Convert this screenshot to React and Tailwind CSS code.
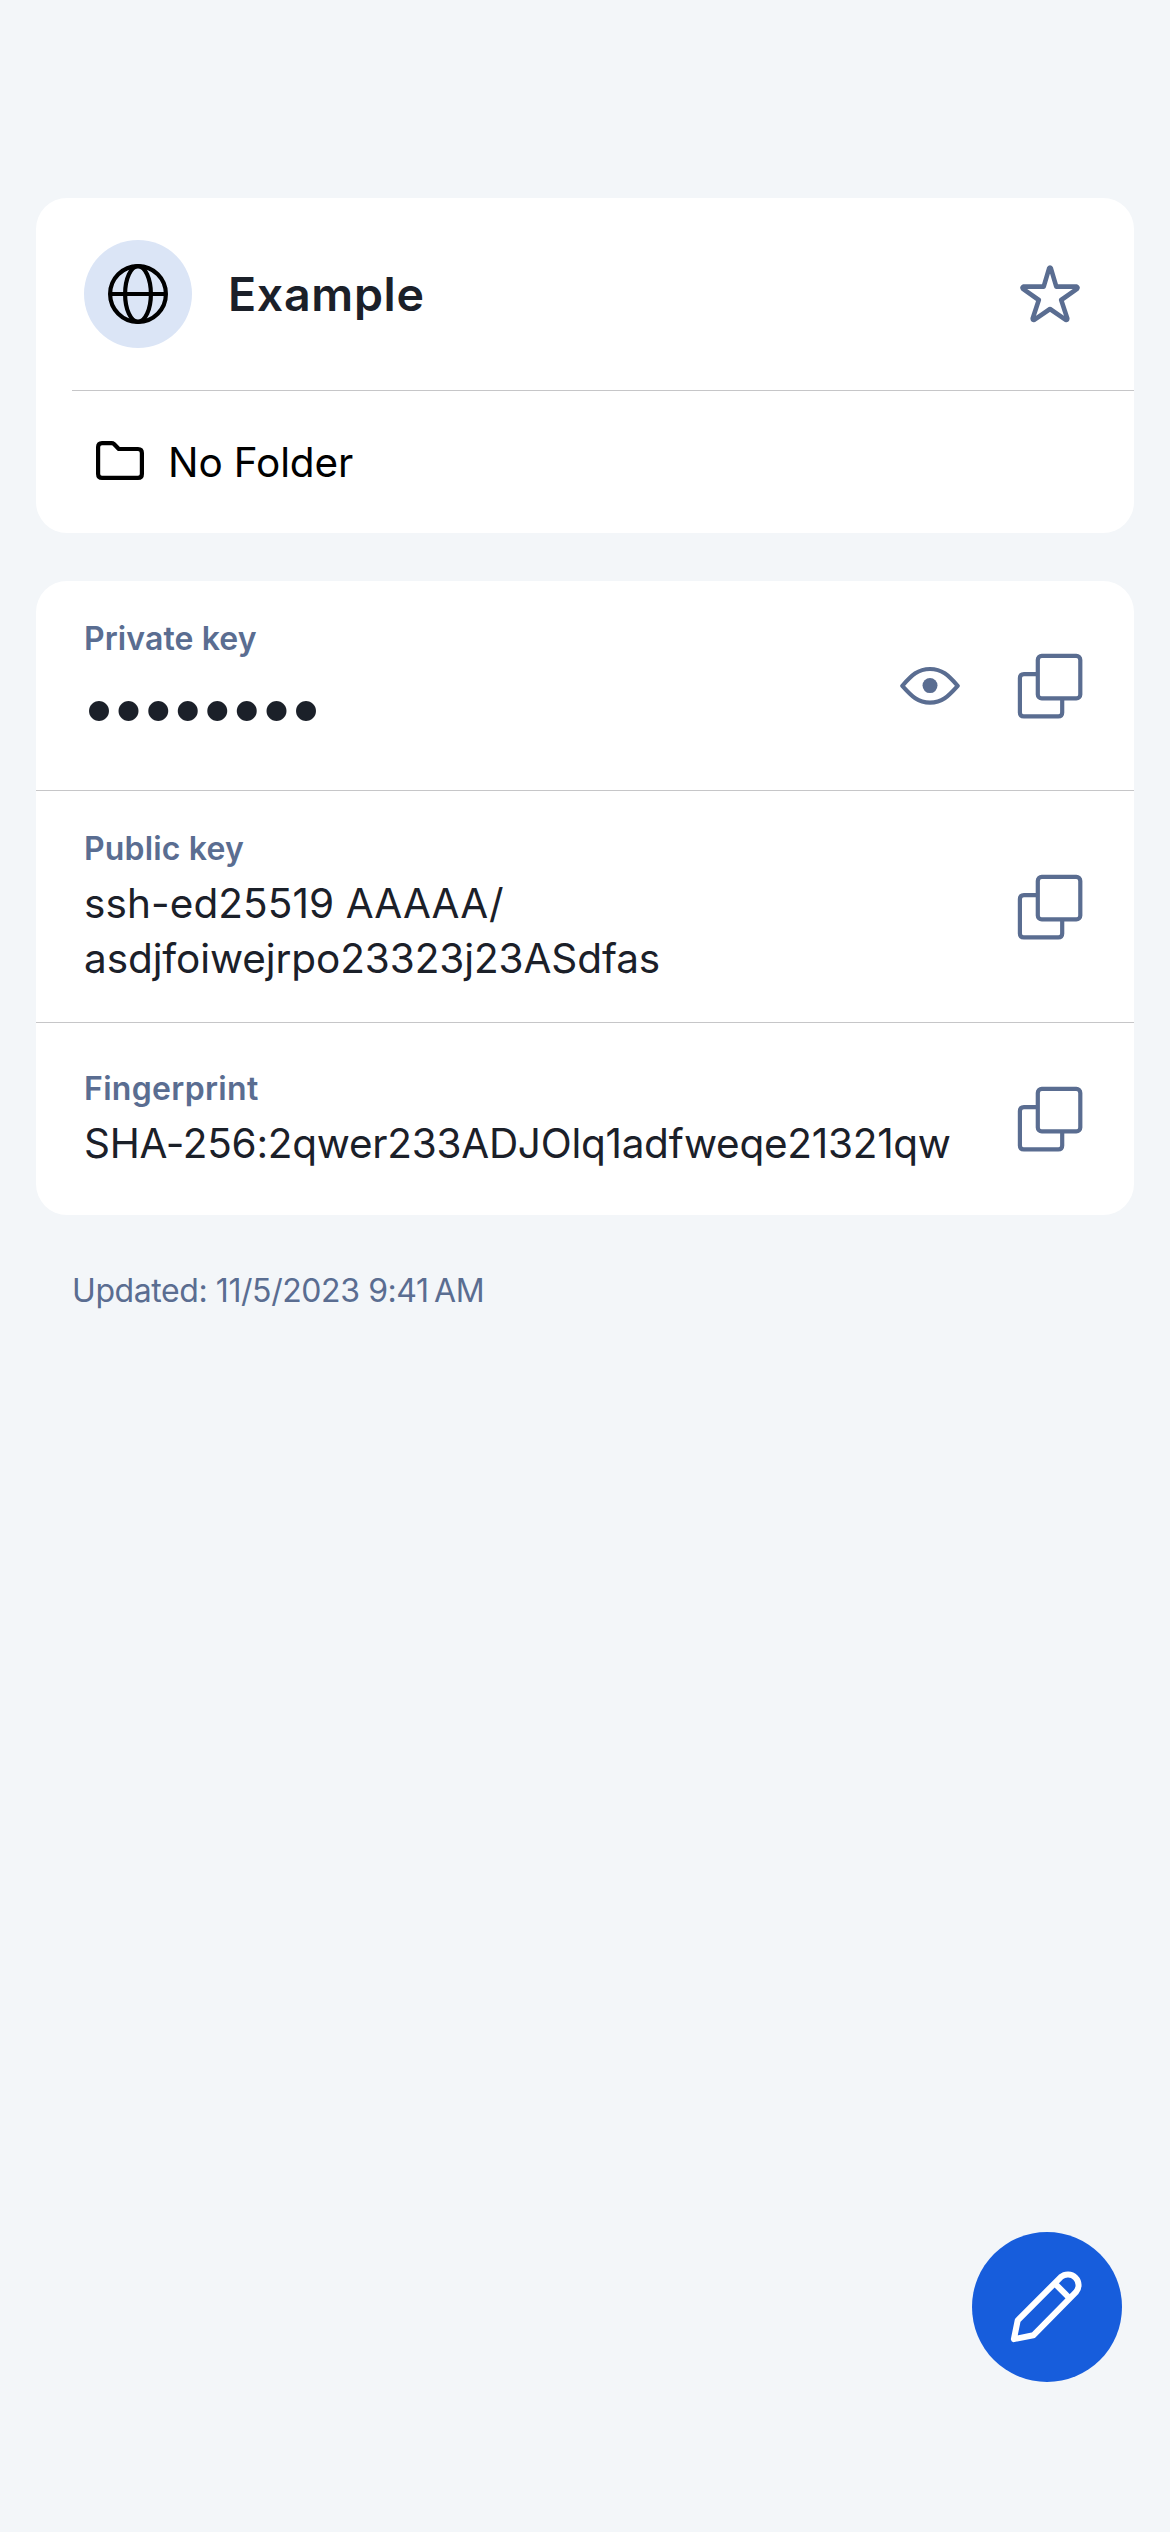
import React from "react";

function GlobeIcon() {
  return (
    <svg width="60" height="60" viewBox="0 0 60 60" fill="none" stroke="#000" strokeWidth="4.2">
      <circle cx="30" cy="30" r="27.9" />
      <ellipse cx="30" cy="30" rx="12.9" ry="27.9" />
      <path d="M2 30H58" />
    </svg>
  );
}

function StarIcon() {
  return (
    <svg width="60" height="60" viewBox="0 0 60 60" fill="none" stroke="#5A6D91" strokeWidth="4.6" strokeLinecap="round" strokeLinejoin="round">
      <path d="M29.2 4.200Q30 2.800 30.800 4.200L36.300 22.600H56.700Q58.200 23.600 57 24.800L41.200 36L47.300 54.500Q47.300 56.300 45.800 55.800L30 45L14.200 55.800Q12.700 56.300 12.700 54.500L18.800 36L3 24.800Q1.800 23.600 3.300 22.600H23.700Z" />
    </svg>
  );
}

function FolderIcon() {
  return (
    <svg width="48" height="39" viewBox="0 0 48 39" fill="none" stroke="#000" strokeWidth="4.2" strokeLinejoin="round">
      <path d="M6 2.1H15.500Q17 2.100 18 3L22.800 8H42Q45.900 8 45.900 11.900V33Q45.900 36.900 42 36.900H6Q2.100 36.900 2.100 33V6Q2.100 2.100 6 2.100Z" />
    </svg>
  );
}

function EyeIcon() {
  return (
    <svg width="60" height="40" viewBox="0 0 60 40" fill="none" stroke="#5A6D91" strokeWidth="4.2" strokeLinejoin="round">
      <path d="M2.300 19.800C12 9 18 3 30 3S48 9 57.700 19.800C48 30.600 42 36.600 30 36.600S12 30.600 2.300 19.800Z" />
      <circle cx="30" cy="19.600" r="7.500" fill="#5A6D91" stroke="none" />
    </svg>
  );
}

function CopyIcon() {
  return (
    <svg width="66" height="66" viewBox="0 0 66 66" fill="none" stroke="#5A6D91" strokeWidth="4.2">
      <rect x="20.800" y="2.900" width="42.500" height="42.500" rx="4" />
      <path d="M20.800 21.100H6.900Q2.900 21.100 2.900 25.100V59.400Q2.900 63.400 6.900 63.400H41.200Q45.200 63.400 45.200 59.400V45.400" />
    </svg>
  );
}

function PencilIcon() {
  return (
    <svg width="75" height="75" viewBox="0 0 75 75" fill="none" stroke="#fff" strokeWidth="6" strokeLinejoin="round">
      <path d="M7.700 50.300L50.800 7.100A10.700 10.700 0 0 1 65.900 22.200L23.300 65.300L3.900 69.100Z" />
      <path d="M44.700 13.300L59.700 28.300" />
    </svg>
  );
}

const label = "text-[32px] leading-[40px] font-semibold text-[#5A6D91] whitespace-nowrap";
const value = "mt-[7px] text-[40.5px] leading-[55px] text-[#1B2029] whitespace-nowrap";
const row = "flex items-center justify-between pl-12 pr-[51px]";

export default function App() {
  return (
    <div className="relative min-h-[2532px] w-full bg-[#F3F6F9] px-9 pt-[198px] font-['Inter',sans-serif]">
      <section className="h-[335px] overflow-hidden rounded-[31px] bg-white">
        <div className="flex h-48 items-center pl-12 pr-[54px]">
          <div className="flex size-[108px] items-center justify-center rounded-full bg-[#DBE5F6]">
            <GlobeIcon />
          </div>
          <h1 className="ml-9 flex-1 text-[46.5px] leading-[60px] font-semibold tracking-[0.7px] text-[#1B2029]">Example</h1>
          <StarIcon />
        </div>
        <div className="ml-9 flex h-[143px] items-center border-t border-[#C6C6C8] pl-6">
          <div className="pb-[3px]">
            <FolderIcon />
          </div>
          <span className="ml-6 pt-[2px] text-[40.5px] leading-[56px] tracking-[-0.12px] text-black">No Folder</span>
        </div>
      </section>

      <section className="mt-12 overflow-hidden rounded-[31px] bg-white">
        <div className={row + " h-[209px]"}>
          <div className="h-[133px]">
            <div className={label + " tracking-[0.1px]"}>Private key</div>
            <div className="-ml-[3px] mt-2 text-[64px] leading-[80px] tracking-[-6.43px] text-[#1B2029]">••••••••</div>
          </div>
          <div className="flex items-center gap-[57px]">
            <EyeIcon />
            <CopyIcon />
          </div>
        </div>
        <div className={row + " h-[232px] border-t border-[#C6C6C8]"}>
          <div className="pt-[2px]">
            <div className={label + " tracking-[0.17px]"}>Public key</div>
            <div className={value}>
              <div className="tracking-[0.09px]">ssh-ed25519 AAAAA/</div>
              <div className="tracking-[-0.09px]">asdjfoiwejrpo23323j23ASdfas</div>
            </div>
          </div>
          <CopyIcon />
        </div>
        <div className={row + " h-[193px] border-t border-[#C6C6C8]"}>
          <div className="pt-[2px]">
            <div className={label + " tracking-[0.33px]"}>Fingerprint</div>
            <div className={value + " tracking-[-0.27px]"}>SHA-256:2qwer233ADJOlq1adfweqe21321qw</div>
          </div>
          <CopyIcon />
        </div>
      </section>

      <p className="mt-14 pl-9 text-[32px] leading-[40px] tracking-[-0.42px] text-[#5A6D91]">Updated: 11/5/2023 9:41{"\u202F"}AM</p>

      <button className="absolute right-12 bottom-[150px] flex size-[150px] items-center justify-center rounded-full bg-[#175DDC]">
        <PencilIcon />
      </button>
    </div>
  );
}
